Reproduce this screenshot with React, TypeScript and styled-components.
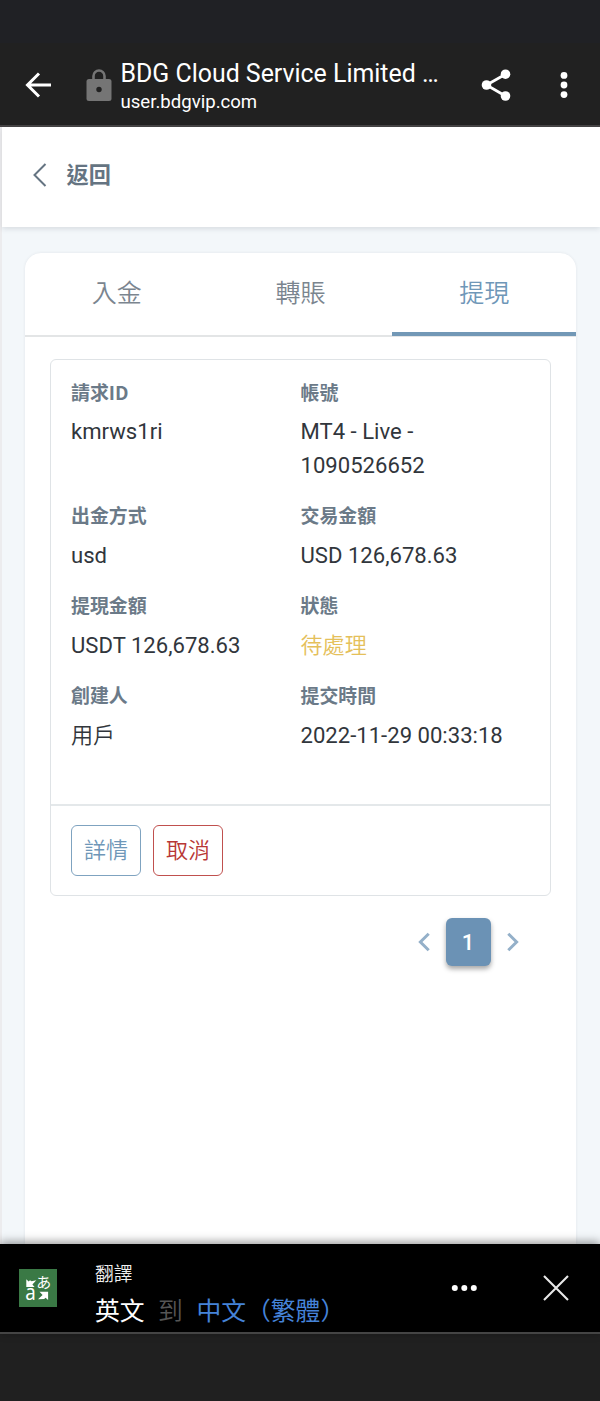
import React from 'react';
import styled, { createGlobalStyle } from 'styled-components';

const GlobalStyle = createGlobalStyle`
  *, *::before, *::after { box-sizing: border-box; }
  body { margin: 0; background: #202020; }
  button { font: inherit; margin: 0; cursor: pointer; }
`;

const Screen = styled.div`
  width: 600px;
  height: 1401px;
  display: flex;
  flex-direction: column;
  overflow: hidden;
  background: #202020;
  font-family: Roboto, "Noto Sans CJK TC", sans-serif;
`;

const StatusArea = styled.div`
  height: 43px;
  flex: none;
  background: #202125;
`;

const BrowserBar = styled.header`
  height: 84px;
  flex: none;
  display: flex;
  align-items: center;
  padding: 1px 25px 0;
  background: #212121;
  border-bottom: 2px solid #454344;
`;

const PageInfo = styled.div`
  width: 330px;
  margin-left: 9px;
  padding-top: 6px;
  color: #fff;
`;

const PageTitle = styled.div`
  font-size: 24.9px;
  line-height: 30px;
  white-space: nowrap;
`;

const PageHost = styled.div`
  font-size: 18.6px;
  line-height: 27px;
`;

const LockIcon = styled.svg`
  margin-left: 33.5px;
`;

const ShareIcon = styled.svg`
  margin-left: 30.5px;
`;

const MoreIcon = styled.svg`
  margin-left: 48.5px;
`;

const Viewport = styled.main`
  height: 1117px;
  flex: none;
  display: flex;
  flex-direction: column;
  border-left: 2px solid #ececee;
  background: #f3f7fa;
`;

const BackBar = styled.nav`
  height: 100px;
  flex: none;
  display: flex;
  align-items: flex-start;
  padding: 33px 0 0 31px;
  background: #fff;
  box-shadow: 0 2px 5px rgba(40, 50, 60, 0.13);
`;

const BackLabel = styled.span`
  margin-left: 19.5px;
  font-size: 22.2px;
  line-height: 30px;
  font-weight: 700;
  color: #657482;
`;

const Panel = styled.section`
  width: 551px;
  flex: 1;
  margin: 26px 0 0 23px;
  border-radius: 16px 16px 0 0;
  background: #fff;
  box-shadow: 0 0 3px rgba(40, 60, 70, 0.09);
`;

const Tabs = styled.div`
  height: 84px;
  display: grid;
  grid-template-columns: repeat(3, 1fr);
  border-bottom: 2px solid #e3e5e6;
`;

const Tab = styled.button<{ $active?: boolean }>`
  height: 83px;
  padding: 0 0 ${(p) => (p.$active ? '4px' : '8px')};
  border: 0 solid #7298b6;
  border-bottom-width: ${(p) => (p.$active ? '4px' : '0')};
  background: none;
  font-family: "Noto Sans CJK TC DemiLight", "Noto Sans CJK TC", sans-serif;
  font-size: 25px;
  line-height: 30px;
  font-weight: 350;
  color: ${(p) => (p.$active ? '#6f97b8' : '#7b858f')};
`;

const RequestCard = styled.article`
  width: 501px;
  height: 537px;
  margin: 22px 0 0 25px;
  display: flex;
  flex-direction: column;
  border: 1px solid #dfe3e6;
  border-radius: 6px;
`;

const Fields = styled.div`
  height: 445px;
  padding: 18px 20px 0;
  display: grid;
  grid-template-columns: 229.5px 1fr;
  align-content: start;
  row-gap: 19.3px;
`;

const FieldName = styled.div`
  margin-bottom: 9.4px;
  font-family: "Noto Sans CJK TC", sans-serif;
  font-size: 18.9px;
  line-height: 28px;
  font-weight: 700;
  color: #6b7a88;
`;

const FieldValue = styled.div<{ $pending?: boolean }>`
  font-size: 22.1px;
  line-height: 33.3px;
  color: ${(p) => (p.$pending ? '#e5c05a' : '#31363c')};
  white-space: nowrap;
`;

const LightText = styled.span`
  font-family: "Noto Sans CJK TC DemiLight", "Noto Sans CJK TC", sans-serif;
  line-height: 1;
  font-weight: 350;
`;

const CardActions = styled.footer`
  flex: 1;
  display: flex;
  gap: 12px;
  padding: 19px 20px;
  border-top: 2px solid #e4e8ea;
`;

const ActionButton = styled.button<{ $danger?: boolean }>`
  width: 70px;
  height: 51px;
  padding: 0 0 6px;
  border: 1px solid ${(p) => (p.$danger ? '#c0504e' : '#7fa3c0')};
  border-radius: 6px;
  background: #fff;
  color: ${(p) => (p.$danger ? '#b83735' : '#6f97b8')};
  font-family: "Noto Sans CJK TC DemiLight", "Noto Sans CJK TC", sans-serif;
  font-size: 22px;
  line-height: 30px;
  font-weight: 350;
`;

const Pagination = styled.div`
  display: flex;
  align-items: center;
  justify-content: flex-end;
  gap: 16px;
  margin: 22px 57px 0 0;
`;

const PageNumber = styled.button`
  width: 45px;
  height: 48px;
  border: 0;
  padding: 0 1px 0 0;
  border-radius: 6px;
  background: #6b92b5;
  box-shadow: 0 3px 5px rgba(0, 0, 0, 0.35);
  color: #fff;
  font-size: 22px;
  font-weight: 500;
`;

const TranslateBar = styled.aside`
  position: relative;
  height: 90px;
  flex: none;
  display: flex;
  align-items: center;
  padding-left: 19px;
  background: #000;
  border-bottom: 2px solid #444;
  box-shadow: 0 -2px 9px rgba(0, 0, 0, 0.42);
`;

const TranslateText = styled.div`
  width: 356px;
  margin-left: 38px;
  padding-top: 10px;
  color: #fff;
  font-family: "Noto Sans CJK TC", sans-serif;
`;

const TranslateTitle = styled.div`
  font-family: "Noto Sans CJK TC DemiLight", "Noto Sans CJK TC", sans-serif;
  font-size: 18.8px;
  line-height: 31px;
  font-weight: 350;
  color: #eee;
`;

const Languages = styled.div`
  display: flex;
  gap: 13.5px;
  font-size: 24.8px;
  line-height: 42px;
  white-space: nowrap;
`;

const Joiner = styled.span`
  color: #555;
  font-family: "Noto Sans CJK TC DemiLight", "Noto Sans CJK TC", sans-serif;
  font-weight: 350;
`;

const Target = styled.span`
  color: #4583d8;
`;

const CloseIcon = styled.svg`
  margin-left: 66px;
`;

type Field = { name: string; value: React.ReactNode; pending?: boolean };

const fields: Field[] = [
  { name: '請求ID', value: 'kmrws1ri' },
  { name: '帳號', value: <>MT4 - Live -<br />1090526652</> },
  { name: '出金方式', value: 'usd' },
  { name: '交易金額', value: 'USD 126,678.63' },
  { name: '提現金額', value: 'USDT 126,678.63' },
  { name: '狀態', value: <LightText>待處理</LightText>, pending: true },
  { name: '創建人', value: <LightText>用戶</LightText> },
  { name: '提交時間', value: '2022-11-29 00:33:18' },
];

export default function App() {
  return (
    <Screen>
      <GlobalStyle />
      <StatusArea />
      <BrowserBar>
        <svg width="27" height="26" viewBox="0 0 27 26" fill="none" stroke="#fff" strokeWidth="3">
          <path d="M14 1.5 2.5 13 14 24.5M2.5 13H26" />
        </svg>
        <LockIcon width="26" height="32" viewBox="0 0 26 32">
          <path d="M7.5 11V7a5.5 5.5 0 0 1 11 0v4" fill="none" stroke="#757575" strokeWidth="2.6" />
          <rect x="0.5" y="10" width="25" height="22" rx="2.5" fill="#757575" />
          <circle cx="13" cy="20.5" r="2.7" fill="#212121" />
        </LockIcon>
        <PageInfo>
          <PageTitle>BDG Cloud Service Limited …</PageTitle>
          <PageHost>user.bdgvip.com</PageHost>
        </PageInfo>
        <ShareIcon width="30" height="32" viewBox="0 0 30 32" fill="#fff">
          <path d="M24.5 5.2 5.5 16l19 11" fill="none" stroke="#fff" strokeWidth="2.8" />
          <circle cx="24.5" cy="5.2" r="4.8" />
          <circle cx="5.5" cy="16" r="4.8" />
          <circle cx="24.5" cy="27" r="4.8" />
        </ShareIcon>
        <MoreIcon width="8" height="28" viewBox="0 0 8 28" fill="#fff">
          <circle cx="4" cy="4.4" r="3.4" />
          <circle cx="4" cy="14" r="3.4" />
          <circle cx="4" cy="23.6" r="3.4" />
        </MoreIcon>
      </BrowserBar>

      <Viewport>
        <BackBar>
          <svg width="14" height="30" viewBox="0 0 14 30" fill="none" stroke="#657482" strokeWidth="2">
            <path d="M12.5 4 1.5 15l11 11" />
          </svg>
          <BackLabel>返回</BackLabel>
        </BackBar>

        <Panel>
          <Tabs>
            <Tab>入金</Tab>
            <Tab>轉賬</Tab>
            <Tab $active>提現</Tab>
          </Tabs>

          <RequestCard>
            <Fields>
              {fields.map((f) => (
                <div key={f.name}>
                  <FieldName>{f.name}</FieldName>
                  <FieldValue $pending={f.pending}>{f.value}</FieldValue>
                </div>
              ))}
            </Fields>
            <CardActions>
              <ActionButton>詳情</ActionButton>
              <ActionButton $danger>取消</ActionButton>
            </CardActions>
          </RequestCard>

          <Pagination>
            <svg width="12" height="20" viewBox="0 0 12 20" fill="none" stroke="#94b0c9" strokeWidth="3">
              <path d="M10.7 1.8 2.4 10l8.3 8.2" />
            </svg>
            <PageNumber>1</PageNumber>
            <svg width="12" height="20" viewBox="0 0 12 20" fill="none" stroke="#94b0c9" strokeWidth="3">
              <path d="M1.3 1.8 9.6 10l-8.3 8.2" />
            </svg>
          </Pagination>
        </Panel>
      </Viewport>

      <TranslateBar>
        <svg width="38" height="38" viewBox="0 0 38 38">
          <rect width="38" height="38" fill="#3a7945" />
          <path d="M7.3 10.3 9.7 12.6 11 11.3l1.6 1 4.7-1-3.9 4.2 2.2 2.5H7.3Z" fill="#fff" />
          <path d="M20.5 22.8h8.6v8.2l-2.5-2.3-1.5 1.4-6.1.2 4.6-4.4Z" fill="#fff" />
          <text x="17.2" y="19.2" fontSize="15" fontFamily="Noto Sans CJK JP, sans-serif" fill="#fff">あ</text>
          <text x="6.2" y="31" fontSize="21" textLength="10.5" lengthAdjust="spacingAndGlyphs" fontFamily="Noto Sans, sans-serif" fill="#fff">a</text>
        </svg>
        <TranslateText>
          <TranslateTitle>翻譯</TranslateTitle>
          <Languages>
            <span>英文</span>
            <Joiner>到</Joiner>
            <Target>中文（繁體）</Target>
          </Languages>
        </TranslateText>
        <svg width="26" height="8" viewBox="0 0 26 8" fill="#fff">
          <circle cx="3.8" cy="4" r="3" />
          <circle cx="13.3" cy="4" r="3" />
          <circle cx="22.8" cy="4" r="3" />
        </svg>
        <CloseIcon width="26" height="26" viewBox="0 0 26 26" fill="none" stroke="#e8e8e8" strokeWidth="2.1">
          <path d="m1 1 24 24M25 1 1 25" />
        </CloseIcon>
      </TranslateBar>
    </Screen>
  );
}
